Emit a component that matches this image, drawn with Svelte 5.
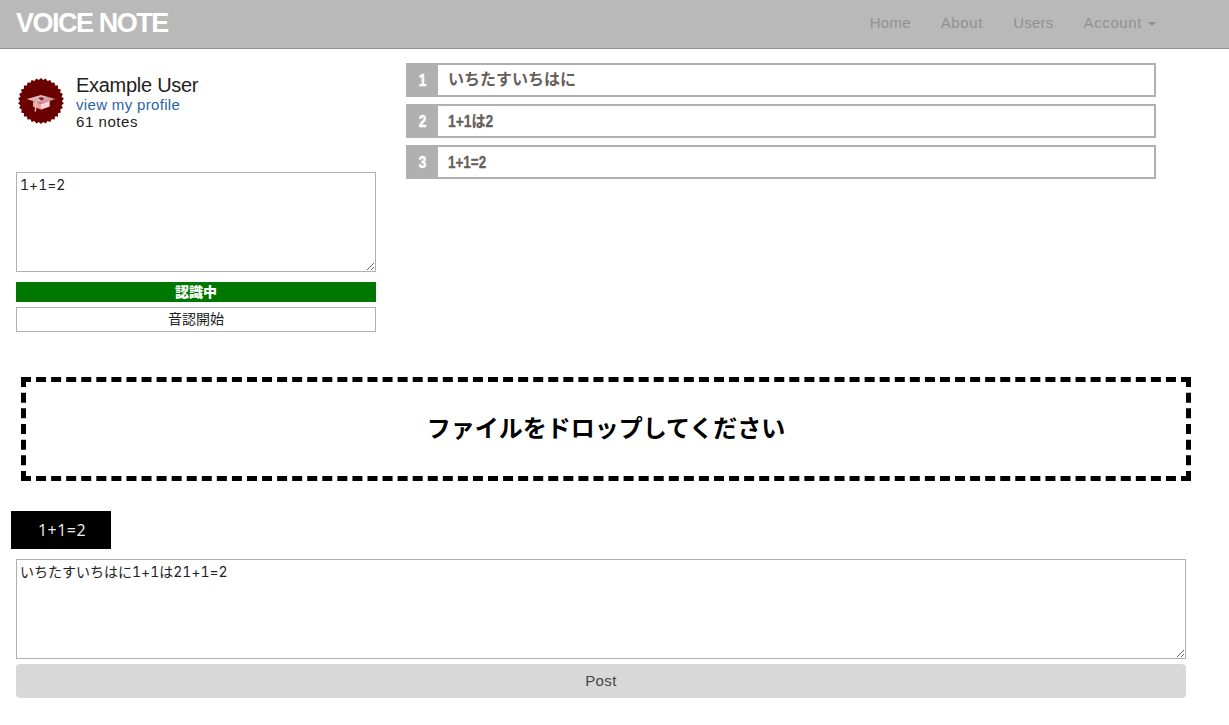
<script>
  const links = ['Home', 'About', 'Users', 'Account'];
  const results = ['いちたすいちはに', '1+1は2', '1+1=2'];
  let recognized = $state('1+1=2');
  let note = $state('いちたすいちはに1+1は21+1=2');

  const teeth = 30;
  const seal = Array.from({ length: teeth * 2 }, (_, i) => {
    const r = i % 2 ? 21 : 23;
    const a = (i * Math.PI) / teeth;
    return `${(23 + r * Math.sin(a)).toFixed(2)},${(23 - r * Math.cos(a)).toFixed(2)}`;
  }).join(' ');
</script>

<header>
  <a class="logo" href="#home"><span>VOICE NOTE</span></a>
  <nav>
    {#each links as link}
      <a class={link.toLowerCase()} href="#{link}"><span>{link}</span>{#if link === 'Account'}<i class="caret"></i>{/if}</a>
    {/each}
  </nav>
</header>

<main>
  <div class="top">
    <aside>
      <section class="user">
        <svg width="46" height="46" viewBox="0 0 46 46">
          <defs>
            <linearGradient id="cap" x1="0" y1="0" x2="1" y2="1">
              <stop offset="0" stop-color="#ecd3d6" />
              <stop offset="1" stop-color="#bd7880" />
            </linearGradient>
          </defs>
          <polygon points={seal} fill="#6b0000" />
          <path d="M15 23 L23 26 L31.5 22.5 V28.5 L23 31.5 L15 28.5Z" fill="#f1a0a3" />
          <path d="M23 26 L31.5 22.5 V28.5 L23 31.5Z" fill="#ffd0d0" />
          <path d="M8.8 21 L23 17 L37.4 21 L23.5 26Z" fill="url(#cap)" />
          <path d="M21 20.6 Q23.3 19.4 25 20.6 Q24.3 22 22.4 21.6" fill="none" stroke="#7a1018" stroke-width="1.3" />
          <path d="M22 21.6 L18.1 23.4 Q17.4 28 17.4 33.5" fill="none" stroke="#efc0c4" stroke-width="1.4" />
        </svg>
        <div>
          <h1>Example User</h1>
          <a href="#profile">view my profile</a>
          <p>61 notes</p>
        </div>
      </section>
      <textarea class="speech" bind:value={recognized} spellcheck="false"></textarea>
      <div class="status">認識中</div>
      <button class="start">音認開始</button>
    </aside>
    <ol>
      {#each results as result, i}
        <li><b><span>{i + 1}</span></b><span class="result" class:latin={i > 0} class:mixed={i === 1}>{result}</span></li>
      {/each}
    </ol>
  </div>

  <div class="drop">ファイルをドロップしてください</div>
  <div class="preview"><span>1+1=2</span></div>
  <textarea class="note" bind:value={note} spellcheck="false"></textarea>
  <button class="post">Post</button>
</main>

<style>
  :global(body) { background: #fff; }
  header, main, button {
    font-family: 'Liberation Sans', 'Noto Sans CJK JP', sans-serif;
  }
  header, main, header *, main * { box-sizing: border-box; }
  a { text-decoration: none; }
  header {
    height: 49px;
    padding: 0 58px 0 16px;
    display: flex;
    justify-content: space-between;
    background: #b9b9b9;
    border-bottom: 1px solid #919191;
  }
  .logo { color: #fff; font-size: 27px; font-weight: 700; letter-spacing: -1.48px; line-height: 46px; white-space: nowrap; }
  nav { display: flex; }
  nav a { padding: 0 15px; color: #919191; font-size: 15px; height: 45px; line-height: 45px; display: flex; align-items: center; white-space: nowrap; }
  .home { letter-spacing: .22px; }
  .about { letter-spacing: .65px; }
  .users { letter-spacing: .25px; }
  .account { letter-spacing: .6px; }
  .caret { margin: 2px 0 0 6px; border: 4px solid transparent; border-top-color: #919191; border-bottom: 0; }
  main { padding: 14px 43px 0 16px; }
  .top { display: flex; gap: 30px; height: 314px; }
  aside { width: 360px; display: flex; flex-direction: column; }
  .user { height: 109px; display: flex; gap: 12px; padding: 15px 0 0 2px; color: #222; }
  .user > div { margin-top: -3px; }
  h1 { margin: 0; font-size: 20px; line-height: 21px; font-weight: 400; letter-spacing: -.28px; }
  .user a, .user p { display: block; margin: 0; font-size: 15px; line-height: 17px; letter-spacing: .33px; }
  .user p { letter-spacing: .55px; }
  .user a { color: #2a64a4; }
  textarea { display: block; margin: 0; padding: 2px 3px; width: 100%; height: 100px; border: 1px solid #b0b0b0; border-radius: 0; outline: 0; color: #222; background: #fff; font-family: Inter, 'Noto Sans CJK JP', sans-serif; font-variant-numeric: tabular-nums; font-feature-settings: 'calt' 0; font-size: 14px; line-height: 19px; resize: both; }
  .status { margin-top: 10px; height: 20px; background: #070; color: #fff; font-size: 14px; line-height: 20px; font-weight: 900; text-align: center; }
  button { display: block; padding: 0; width: 100%; }
  .start { margin-top: 5px; height: 25px; border: 1px solid #b0b0b0; background: #fff; color: #222; font-size: 14px; line-height: 20px; padding-bottom: 2px; }
  ol { list-style: none; margin: 0; padding: 0; width: 750px; display: flex; flex-direction: column; gap: 7px; }
  li { display: flex; height: 34px; border: 2px solid #b0b0b0; line-height: 30px; font-size: 16px; font-weight: 700; color: #665f5b; }
  li b { width: 30px; padding-right: 1px; background: #b0b0b0; color: #fff; text-align: center; font-size: 16px; line-height: 31px; -webkit-text-stroke: .5px #fff; }
  li b span { display: inline-block; transform: scaleX(.85); }
  .result { margin-left: 10px; }
  .latin { line-height: 32px; transform: scaleX(.84); transform-origin: 0 50%; -webkit-text-stroke: .3px #665f5b; }
  .mixed { transform: scaleX(.87); }
  .drop { margin: 0 -5px 0 5px; width: 1170px; height: 104px; border: 5px dashed #000; color: #000; font-size: 24px; font-weight: 700; line-height: 93px; text-align: center; }
  .preview { margin: 30px 0 10px -5px; width: 100px; height: 38px; background: #000; color: #eee; font-family: 'Open Sans', sans-serif; font-size: 16px; line-height: 38px; text-align: center; padding-left: 2px; letter-spacing: .5px; }
  .post { margin-top: 5px; height: 34px; border: 0; border-radius: 4px; background: #d8d8d8; color: #444; font-size: 15px; line-height: 34px; letter-spacing: .4px; }
</style>
